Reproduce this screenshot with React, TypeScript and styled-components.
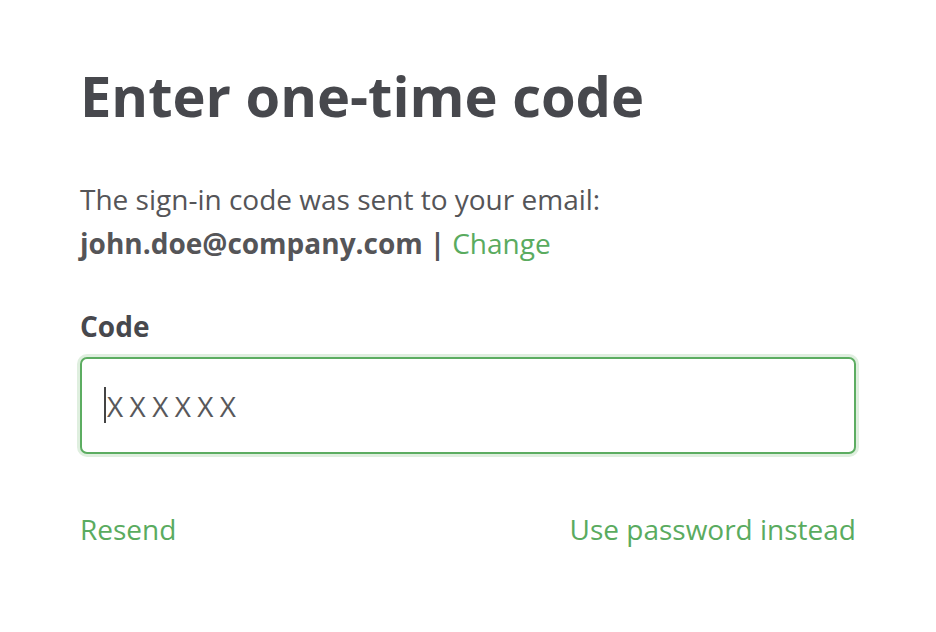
import React from 'react';
import styled, { createGlobalStyle } from 'styled-components';

const GlobalStyle = createGlobalStyle`
  html, body {
    margin: 0;
    padding: 0;
    background: #ffffff;
  }
  body {
    font-family: 'Open Sans', 'Noto Sans', sans-serif;
    -webkit-font-smoothing: antialiased;
  }
`;

const Page = styled.div`
  width: 936px;
  min-height: 632px;
  box-sizing: border-box;
  padding: 62px 80px 0 80px;
`;

const Title = styled.h1`
  margin: 0;
  font-size: 56px;
  line-height: 1.2;
  font-weight: 700;
  color: #47484d;
`;

const Info = styled.p`
  margin: 48px 0 0 0;
  font-size: 28px;
  line-height: 44px;
  color: #555558;
`;

const Email = styled.strong`
  font-weight: 700;
`;

const Divider = styled.span`
  font-weight: 700;
  margin: 0 7px;
`;

const Link = styled.a`
  color: #5aab5f;
  text-decoration: none;
  font-size: 28px;
  cursor: pointer;
`;

const Field = styled.div`
  margin-top: 43px;
  display: flex;
  flex-direction: column;
  gap: 13px;
`;

const Label = styled.label`
  font-size: 28px;
  line-height: 36px;
  font-weight: 700;
  color: #47484d;
`;

const InputWrap = styled.div`
  position: relative;
`;

const CodeInput = styled.input`
  width: 100%;
  height: 97px;
  box-sizing: border-box;
  border: 2px solid #5cad61;
  border-radius: 7px;
  box-shadow: 0 0 0 3px #dfefdf;
  outline: none;
  padding: 0 23px 0 25px;
  font-family: 'Open Sans', sans-serif;
  font-size: 28px;
  letter-spacing: 6.4px;
  color: #444;

  &::placeholder {
    color: #58585b;
    opacity: 1;
  }
`;

const Caret = styled.span`
  position: absolute;
  left: 24px;
  top: 30px;
  width: 2px;
  height: 36px;
  background: #444;
`;

const Actions = styled.div`
  margin-top: 57px;
  display: flex;
  justify-content: space-between;
  align-items: center;
  line-height: 36px;
`;

export default function App() {
  return (
    <>
      <GlobalStyle />
      <Page>
        <Title>Enter one-time code</Title>
        <Info>
          The sign-in code was sent to your email:
          <br />
          <Email>john.doe@company.com</Email>
          <Divider>|</Divider>
          <Link>Change</Link>
        </Info>
        <Field>
          <Label htmlFor="code">Code</Label>
          <InputWrap>
            <CodeInput id="code" placeholder="XXXXXX" />
            <Caret />
          </InputWrap>
        </Field>
        <Actions>
          <Link>Resend</Link>
          <Link>Use password instead</Link>
        </Actions>
      </Page>
    </>
  );
}
